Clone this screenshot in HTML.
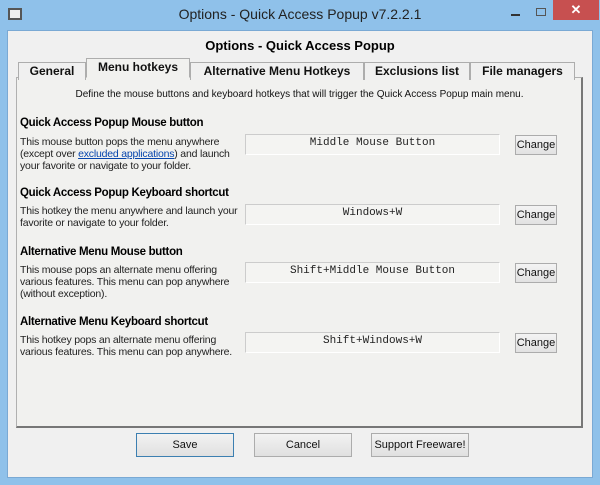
<!DOCTYPE html>
<html><head><style>
*{margin:0;padding:0;box-sizing:border-box}
body{width:600px;height:485px;background:#8fc1ea;font-family:"Liberation Sans",sans-serif;position:relative;overflow:hidden}
.a{position:absolute}
.title{left:0;top:6px;width:600px;text-align:center;font-size:14px;color:#222}
.client{left:7px;top:30px;width:586px;height:448px;background:#f0f0f0;border:1px solid #7aa9d4}
.h1{left:0;top:38px;width:600px;text-align:center;font-size:13px;font-weight:bold;color:#000}
.tab{top:60px;height:18px;border:1px solid #adadad;border-bottom:none;background:#f0f0f0;font-size:12px;font-weight:bold;text-align:center;line-height:16px;color:#111}
.panel{left:16px;top:77px;width:567px;height:351px;border:1px solid #b0b0b0;border-right:2px solid #777;border-bottom:2px solid #777;background:#f1f1ef}
.desc{left:16px;top:89px;width:567px;text-align:center;font-size:10px;color:#111}
.hd{left:20px;font-size:11.5px;font-weight:bold;color:#000;letter-spacing:-0.3px}
.tx{left:20px;font-size:10.5px;line-height:12px;color:#222;width:225px;letter-spacing:-0.2px}
.box{left:245px;width:255px;height:21px;border:1px solid #ccc;border-right-color:#fff;border-bottom-color:#fff;font-family:"Liberation Mono",monospace;font-size:11px;text-align:center;line-height:16px;color:#222;background:#f4f4f2}
.ch{left:515px;width:42px;height:20px;border:1px solid #acacac;background:linear-gradient(#f4f4f4,#e2e2e2);font-size:11px;text-align:center;line-height:18px;color:#111}
.btn{top:433px;width:98px;height:24px;border:1px solid #acacac;background:linear-gradient(#f2f2f2,#e0e0e0);font-size:11px;text-align:center;line-height:22px;color:#111}
a{color:#0645ad;text-decoration:underline}
</style></head><body>
<div class="a" style="left:8px;top:8px;width:14px;height:12px;border:2px solid #555;background:#eee"></div>
<div class="a title">Options - Quick Access Popup v7.2.2.1</div>
<div class="a" style="left:511px;top:14px;width:9px;height:2px;background:#333"></div>
<div class="a" style="left:536px;top:8px;width:10px;height:8px;border:1px solid #555"></div>
<div class="a" style="left:553px;top:0;width:46px;height:20px;background:#c75050;color:#fff;text-align:center;font-size:13px;line-height:19px;font-weight:bold">✕</div>
<div class="a client"></div>
<div class="a h1">Options - Quick Access Popup</div>
<div class="a panel"></div>
<div class="a tab" style="left:18px;width:68px;top:62px">General</div>
<div class="a tab" style="left:86px;width:104px;top:58px;height:20px;background:#f1f1ef;border-bottom:1px solid #f1f1ef">Menu hotkeys</div>
<div class="a tab" style="left:190px;width:174px;top:62px">Alternative Menu Hotkeys</div>
<div class="a tab" style="left:364px;width:106px;top:62px">Exclusions list</div>
<div class="a tab" style="left:470px;width:105px;top:62px">File managers</div>
<div class="a desc">Define the mouse buttons and keyboard hotkeys that will trigger the Quick Access Popup main menu.</div>

<div class="a hd" style="top:117px">Quick Access Popup Mouse button</div>
<div class="a tx" style="top:136px">This mouse button pops the menu anywhere (except over <a>excluded applications</a>) and launch your favorite or navigate to your folder.</div>
<div class="a box" style="top:134px">Middle Mouse Button</div>
<div class="a ch" style="top:135px">Change</div>

<div class="a hd" style="top:187px">Quick Access Popup Keyboard shortcut</div>
<div class="a tx" style="top:205px">This hotkey the menu anywhere and launch your favorite or navigate to your folder.</div>
<div class="a box" style="top:204px">Windows+W</div>
<div class="a ch" style="top:205px">Change</div>

<div class="a hd" style="top:246px">Alternative Menu Mouse button</div>
<div class="a tx" style="top:264px">This mouse pops an alternate menu offering various features. This menu can pop anywhere (without exception).</div>
<div class="a box" style="top:262px">Shift+Middle Mouse Button</div>
<div class="a ch" style="top:263px">Change</div>

<div class="a hd" style="top:316px">Alternative Menu Keyboard shortcut</div>
<div class="a tx" style="top:334px">This hotkey pops an alternate menu offering various features. This menu can pop anywhere.</div>
<div class="a box" style="top:332px">Shift+Windows+W</div>
<div class="a ch" style="top:333px">Change</div>

<div class="a btn" style="left:136px;border-color:#3c7fb1">Save</div>
<div class="a btn" style="left:254px">Cancel</div>
<div class="a btn" style="left:371px">Support Freeware!</div>
</body></html>
